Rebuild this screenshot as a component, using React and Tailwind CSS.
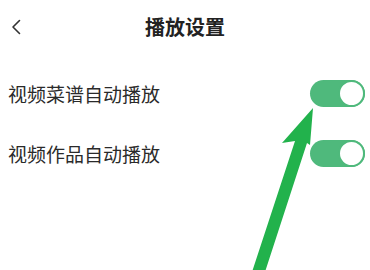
import React from "react";

function Toggle() {
  return (
    <div className="w-[55px] h-[27px] rounded-full bg-[#4fb97c] flex items-center justify-end pr-[2px]">
      <div className="w-[23px] h-[23px] rounded-full bg-white border-[2px] border-[#4fb97c] box-content -mr-[2px]" />
    </div>
  );
}

export default function App() {
  return (
    <div
      className="relative w-[370px] h-[270px] bg-white overflow-hidden"
      style={{ fontFamily: '"Noto Sans CJK SC", "Noto Sans", sans-serif' }}
    >
      <div className="h-[54px] grid grid-cols-[1fr_auto_1fr] items-center px-[11px]">
        <svg width="10" height="16" viewBox="0 0 10 16" className="mb-[1px]">
          <path d="M8.5 1.5 L2 8 L8.5 14.5" fill="none" stroke="#333" strokeWidth="1.6" strokeLinecap="round" strokeLinejoin="round" />
        </svg>
        <div className="text-[20px] font-bold text-[#222] leading-none">播放设置</div>
        <div />
      </div>
      <div className="mt-[9px] flex flex-col">
        <div className="h-[60px] flex items-center justify-between pl-[8px] pr-[5px]">
          <span className="text-[19px] text-[#2a2a2a] leading-none">视频菜谱自动播放</span>
          <Toggle />
        </div>
        <div className="h-[60px] flex items-center justify-between pl-[8px] pr-[5px]">
          <span className="text-[19px] text-[#2a2a2a] leading-none">视频作品自动播放</span>
          <Toggle />
        </div>
      </div>
      <svg className="absolute left-0 top-0 pointer-events-none" width="370" height="270" viewBox="0 0 370 270">
        <polygon
          points="313,108 282,143 295,141 252,272 265,272 307,143 310,145"
          fill="#22b24c"
        />
      </svg>
    </div>
  );
}
